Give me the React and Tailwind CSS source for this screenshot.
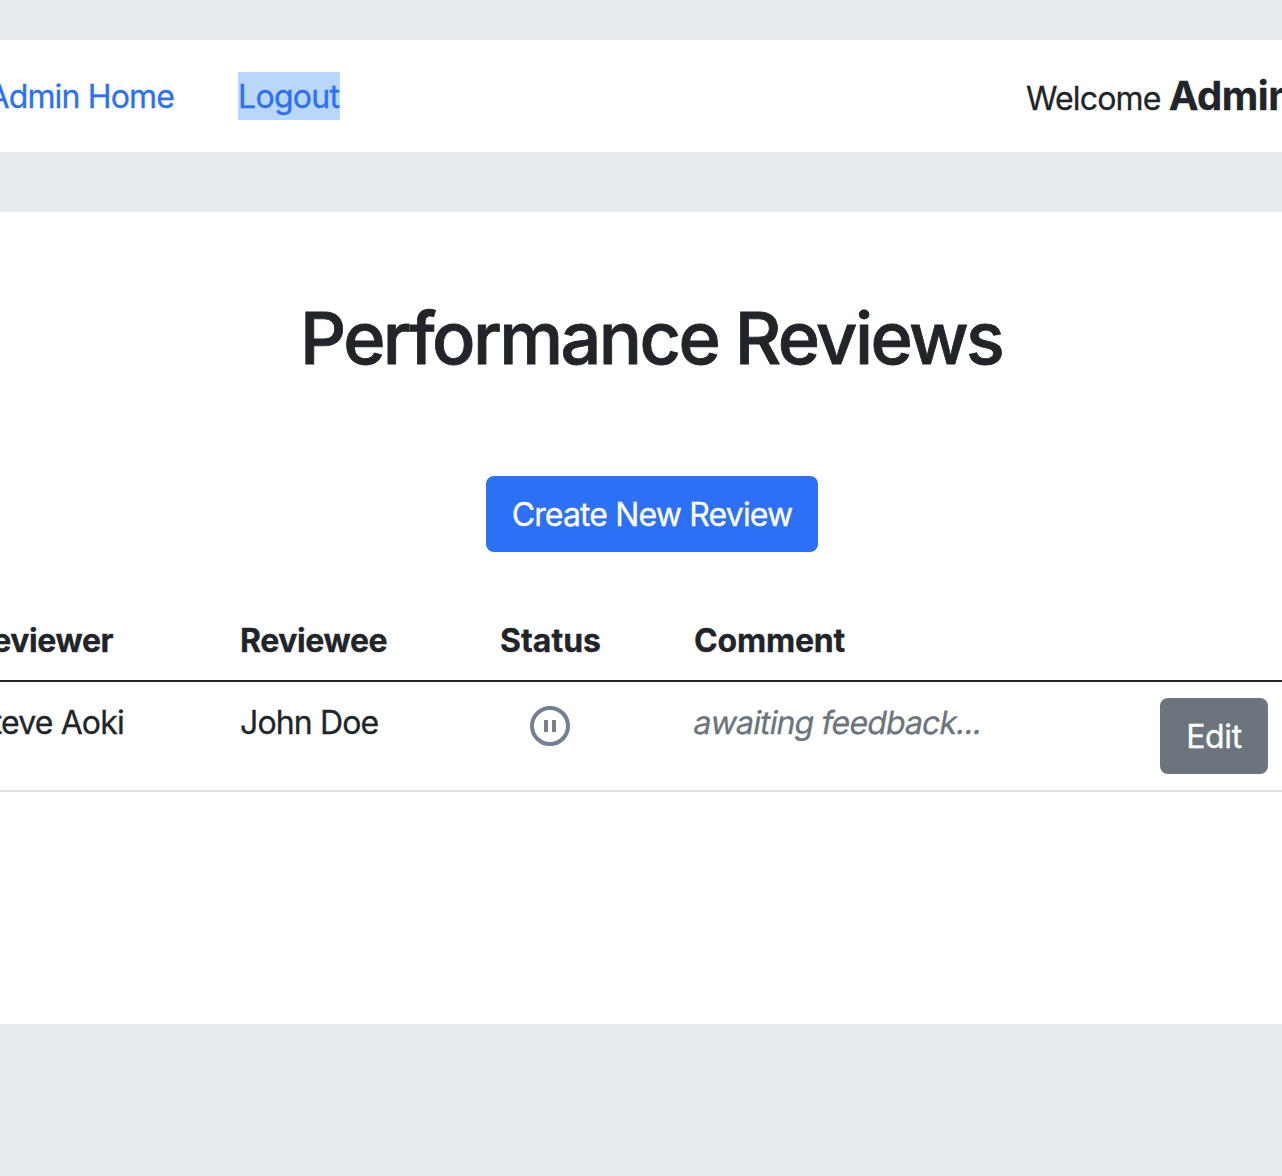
const text = "shrink-0 whitespace-nowrap leading-[50px]";

export default function App() {
  return (
    <div className="h-[1176px] w-[1282px] overflow-hidden bg-[#e5ebee] pt-10 font-['Inter',sans-serif] text-[32px] tracking-[-0.85px] text-[#212529] [-webkit-text-stroke-width:0.3px]">
      <nav className="flex h-28 items-center gap-16 overflow-hidden bg-white">
        <div className="flex w-[174px] shrink-0 justify-end">
          <a className="shrink-0 pt-[2px] leading-[46px] whitespace-nowrap text-[#2b70f5]">Admin Home</a>
        </div>
        <a className="h-12 w-[102px] shrink-0 bg-[#b9d6fb] pt-[2px] leading-[46px] tracking-[-0.7px] text-[#2b70f5]">Logout</a>
        <div className="ml-[622px] shrink-0 pt-[2px] leading-[48px] whitespace-nowrap">
          Welcome <strong className="text-[40px] font-bold tracking-[-0.5px]">Admin</strong>
        </div>
      </nav>
      <main className="mt-[60px] h-[812px] overflow-hidden bg-white pt-[78px]">
        <h1 className="ml-[300px] text-[72px] leading-[96px] font-medium tracking-[-2.6px] whitespace-nowrap [-webkit-text-stroke-width:0.8px]">Performance Reviews</h1>
        <button className="mt-[90px] ml-[486px] block h-[76px] w-[332px] rounded-lg bg-[#2b70f5] pt-[2px] whitespace-nowrap text-white">Create New Review</button>
        <div className="mt-16 flex h-[66px] border-b-2 border-[#212529] font-bold tracking-[-0.4px]">
          <div className={`${text} -ml-[28px] w-[268px]`}>Reviewer</div>
          <div className={`${text} w-[260px]`}>Reviewee</div>
          <div className={`${text} w-[194px] tracking-normal`}>Status</div>
          <div className={`${text} tracking-[-0.2px]`}>Comment</div>
        </div>
        <div className="flex h-[110px] border-b-2 border-[#dee2e6] pt-4">
          <div className={`${text} -ml-[28px] w-[268px]`}>Steve Aoki</div>
          <div className={`${text} w-[290px]`}>John Doe</div>
          <svg className="mt-2 mr-[124px] h-10 w-10 shrink-0" viewBox="0 0 40 40" fill="none" stroke="#748091">
            <circle cx="20" cy="20" r="18" strokeWidth="4" />
            <path d="M16 14v12M24 14v12" strokeWidth="4" />
          </svg>
          <div className="w-[466px] shrink-0">
            <em className="inline-block -skew-x-[10deg] leading-[50px] whitespace-nowrap text-[#6c757d] not-italic">awaiting feedback...</em>
          </div>
          <button className="h-[76px] w-[108px] shrink-0 rounded-lg bg-[#6c757d] pt-[2px] tracking-[-0.4px] text-white">Edit</button>
        </div>
      </main>
    </div>
  );
}
